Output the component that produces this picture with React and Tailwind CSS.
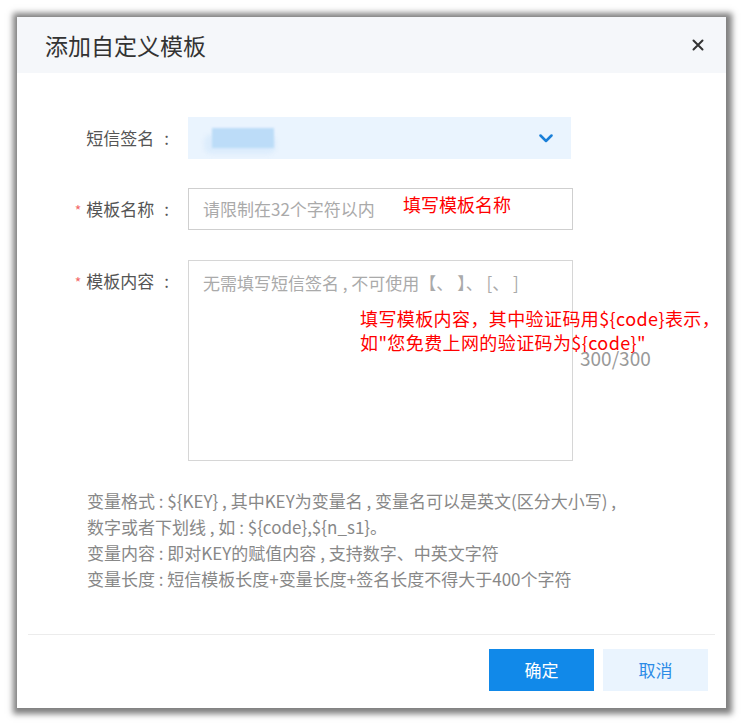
import React from "react";

const FONT = { fontFamily: '"Noto Sans CJK SC", "Noto Sans", sans-serif' };

function Label({ required, children }) {
  return (
    <div className="w-[171px] shrink-0 pr-[19px] text-right text-[17px] leading-[42px] text-[#555]">
      {required && <span className="mr-[5px] text-[14px] text-[#f36a6a]">*</span>}
      {children}
      <span className="ml-[10px]">:</span>
    </div>
  );
}

export default function App() {
  return (
    <div className="h-[726px] w-[743px] bg-white pl-[17px] pt-[17px]" style={FONT}>
      <div className="flex h-[691px] w-[709px] flex-col bg-white shadow-[1px_1px_6px_5px_rgba(0,0,0,0.5)]">
        <div className="flex h-[56px] items-center justify-between bg-[#f5f7fa] pl-[28px] pr-[22px]">
          <div className="text-[23px] text-[#333]">添加自定义模板</div>
          <svg width="12" height="12" viewBox="0 0 12 12">
            <path d="M1.5 1.5L10.5 10.5M10.5 1.5L1.5 10.5" stroke="#333" strokeWidth="2" strokeLinecap="round" />
          </svg>
        </div>

        <div className="flex-1 pt-[44px]">
          <div className="flex items-start">
            <Label>短信签名</Label>
            <div className="flex h-[42px] w-[383px] items-center justify-between bg-[#eaf4fe] pl-[20px] pr-[18px]">
              <div className="relative h-[20px] w-[66px]">
                <div className="absolute left-[-4px] top-[6px] h-[20px] w-[72px] rounded-[8px] bg-[#dcecfc] blur-[2px]" />
                <div className="absolute left-[4px] top-0 h-[20px] w-[62px] bg-[#bcdcf8] blur-[1px]" />
              </div>
              <svg width="14" height="9" viewBox="0 0 14 9">
                <path d="M1.5 1.5L7 7L12.5 1.5" fill="none" stroke="#1a7fd8" strokeWidth="2.5" strokeLinecap="round" strokeLinejoin="round" />
              </svg>
            </div>
          </div>

          <div className="mt-[29px] flex items-start">
            <Label required>模板名称</Label>
            <div className="relative flex h-[42px] w-[385px] items-center border border-[#cfcfcf] pl-[14px] text-[17px] text-[#aaa]">
              请限制在32个字符以内
              <div className="absolute left-[214px] top-[3px] text-[18px] leading-[24px] text-[#ff0000]">填写模板名称</div>
            </div>
          </div>

          <div className="mt-[29px] flex items-start">
            <Label required>模板内容</Label>
            <div className="relative h-[201px] w-[385px] border border-[#d6d6d6] pl-[14px] pt-[10px] text-[17px] leading-[24px] text-[#aaa]">
              无需填写短信签名 , 不可使用【、 】、 [、 ]
              <div className="absolute left-[171px] top-[45px] whitespace-nowrap text-[18px] leading-[24px] tracking-[0.4px] text-[#ff0000]">
                <div>填写模板内容，其中验证码用${"{code}"}表示，</div>
                <div>如"您免费上网的验证码为${"{code}"}"</div>
              </div>
              <div className="absolute left-[391px] top-[85px] text-[19px] leading-[24px] text-[#999]">300/300</div>
            </div>
          </div>

          <div className="mt-[27px] pl-[70px] text-[17px] leading-[26px] text-[#888]">
            <div>变量格式 : ${"{KEY}"} , 其中KEY为变量名 , 变量名可以是英文(区分大小写) ,</div>
            <div>数字或者下划线 , 如 : ${"{code}"},${"{n_s1}"}。</div>
            <div>变量内容 : 即对KEY的赋值内容 , 支持数字、中英文字符</div>
            <div>变量长度 : 短信模板长度+变量长度+签名长度不得大于400个字符</div>
          </div>
        </div>

        <div className="mx-[11px] h-px bg-[#ececec]" />
        <div className="flex justify-end gap-[9px] pb-[17px] pr-[18px] pt-[14px]">
          <button className="h-[42px] w-[105px] bg-[#1189e9] text-[17px] text-white">确定</button>
          <button className="h-[42px] w-[105px] bg-[#eaf4fe] text-[17px] text-[#2b8be6]">取消</button>
        </div>
      </div>
    </div>
  );
}
